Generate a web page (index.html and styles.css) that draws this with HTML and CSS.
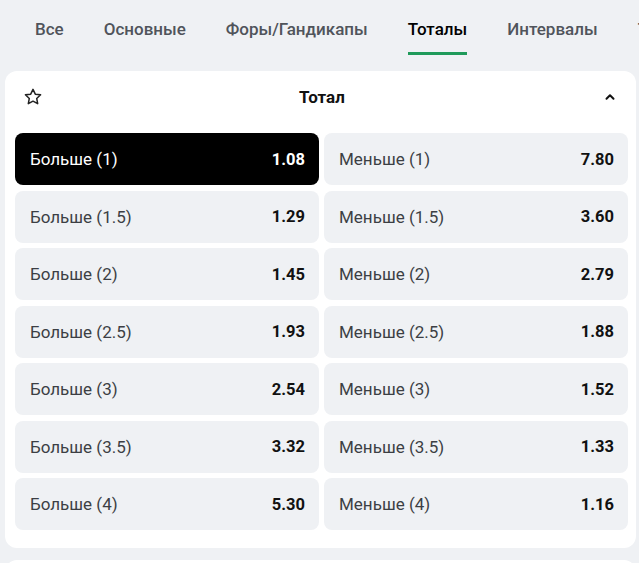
FILE: index.html
```html
<!DOCTYPE html>
<html lang="ru">
<head>
<meta charset="utf-8">
<link rel="stylesheet" href="styles.css">
</head>
<body>
<nav class="tabs">
  <div class="tab">Все</div>
  <div class="tab">Основные</div>
  <div class="tab">Форы/Гандикапы</div>
  <div class="tab active">Тоталы</div>
  <div class="tab">Интервалы</div>
  <div class="tab">Тайм</div>
</nav>
<section class="card">
  <header class="card-head">
    <svg class="star" width="20" height="20" viewBox="0 0 24 24"><path d="M12 2.8l2.75 5.8 6.35.78-4.67 4.38 1.2 6.3L12 16.98 6.37 20.06l1.2-6.3L2.9 9.38l6.35-.78z" fill="none" stroke="#222" stroke-width="1.8" stroke-linejoin="round"/></svg>
    <h2 class="title">Тотал</h2>
    <svg class="chev" width="12" height="12" viewBox="0 0 12 12"><path d="M2.5 7.8L6 4.3l3.5 3.5" fill="none" stroke="#111" stroke-width="2" stroke-linecap="round" stroke-linejoin="round"/></svg>
  </header>
  <div class="grid">
    <div class="odd selected"><span class="lbl">Больше (1)</span><span class="val">1.08</span></div>
    <div class="odd"><span class="lbl">Меньше (1)</span><span class="val">7.80</span></div>
    <div class="odd"><span class="lbl">Больше (1.5)</span><span class="val">1.29</span></div>
    <div class="odd"><span class="lbl">Меньше (1.5)</span><span class="val">3.60</span></div>
    <div class="odd"><span class="lbl">Больше (2)</span><span class="val">1.45</span></div>
    <div class="odd"><span class="lbl">Меньше (2)</span><span class="val">2.79</span></div>
    <div class="odd"><span class="lbl">Больше (2.5)</span><span class="val">1.93</span></div>
    <div class="odd"><span class="lbl">Меньше (2.5)</span><span class="val">1.88</span></div>
    <div class="odd"><span class="lbl">Больше (3)</span><span class="val">2.54</span></div>
    <div class="odd"><span class="lbl">Меньше (3)</span><span class="val">1.52</span></div>
    <div class="odd"><span class="lbl">Больше (3.5)</span><span class="val">3.32</span></div>
    <div class="odd"><span class="lbl">Меньше (3.5)</span><span class="val">1.33</span></div>
    <div class="odd"><span class="lbl">Больше (4)</span><span class="val">5.30</span></div>
    <div class="odd"><span class="lbl">Меньше (4)</span><span class="val">1.16</span></div>
  </div>
</section>
<section class="card next"></section>
</body>
</html>
```

FILE: styles.css
```css
html, body {
  margin: 0;
  padding: 0;
  background: #eff1f4;
  font-family: Roboto, "Liberation Sans", Arial, sans-serif;
  overflow: hidden;
}
.tabs {
  display: flex;
  gap: 40px;
  padding-left: 35px;
  height: 71px;
  white-space: nowrap;
  overflow: hidden;
}
.tab {
  padding-top: 19px;
  font-size: 17px;
  line-height: 20px;
  font-weight: 500;
  color: #50545b;
  box-sizing: border-box;
  height: 55px;
  border-bottom: 3px solid transparent;
  flex: none;
}
.tab.active {
  color: #000;
  border-bottom-color: #1f9a5a;
}
.card {
  background: #fff;
  border-radius: 12px;
  margin-left: 5px;
  width: 631px;
  box-sizing: border-box;
}
.card-head {
  height: 52px;
  display: grid;
  grid-template-columns: 1fr auto 1fr;
  align-items: center;
  padding: 0 20px 0 23px;
}
.star { display: block; margin-left: -5px; }
.chev { display: block; justify-self: end; }
.title {
  margin: 0;
  font-size: 17px;
  font-weight: 700;
  color: #111;
}
.grid {
  display: grid;
  grid-template-columns: 1fr 1fr;
  grid-auto-rows: 52px;
  column-gap: 5px;
  row-gap: 5.5px;
  padding: 10px 8px 18px 10px;
}
.odd {
  background: #eff1f4;
  border-radius: 8px;
  display: flex;
  align-items: center;
  justify-content: space-between;
  padding: 0 14px 0 15px;
  font-size: 17px;
}
.lbl { color: #3c3f44; }
.val { color: #111; font-weight: 700; font-size: 16.5px; }
.odd.selected { background: #000; }
.odd.selected .lbl, .odd.selected .val { color: #fff; }
.card.next {
  margin-top: 12px;
  height: 40px;
}
```
